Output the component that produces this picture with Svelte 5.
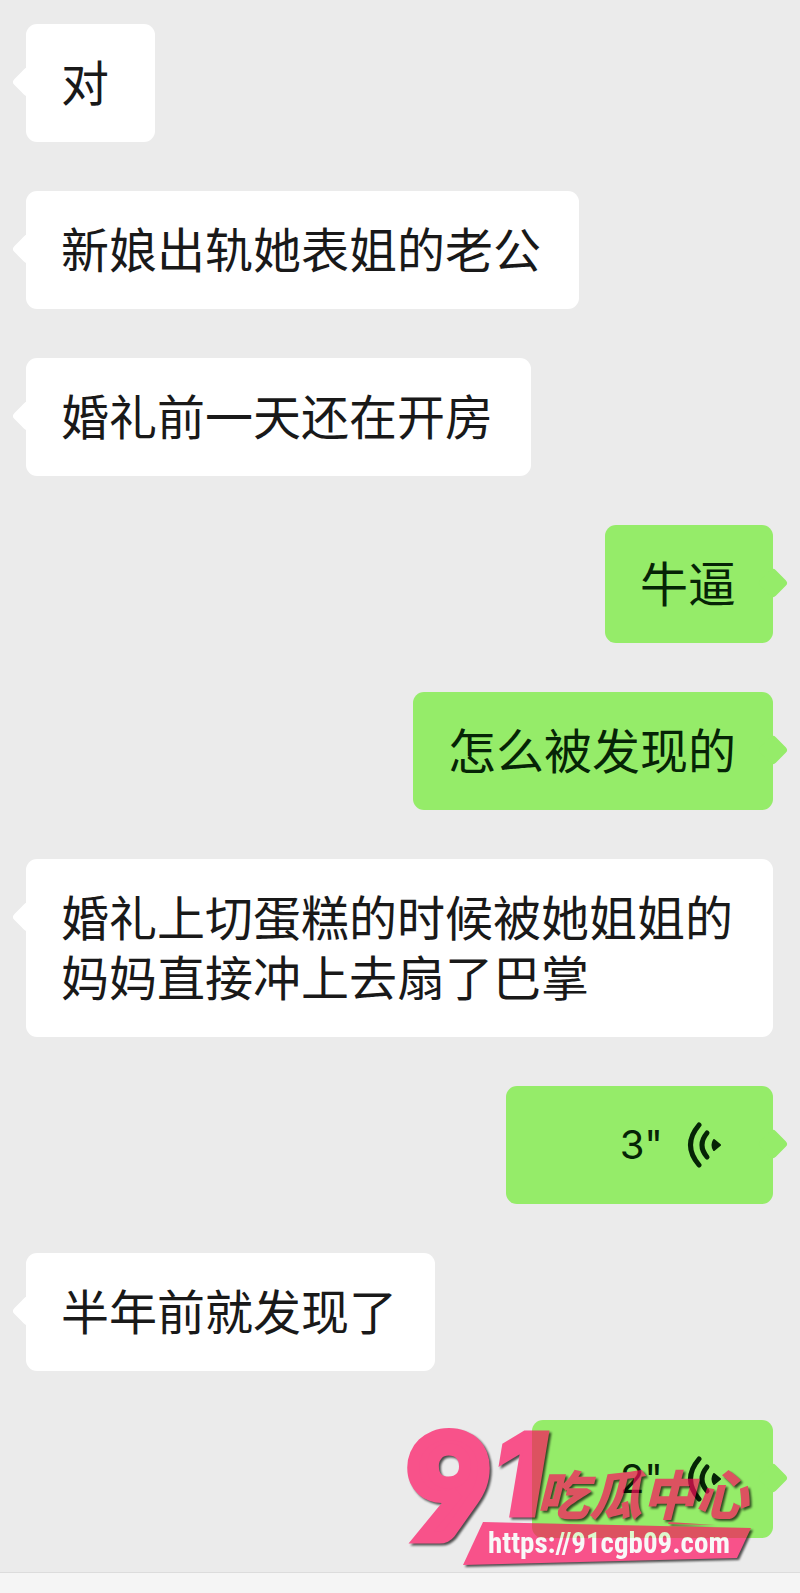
<script>
	const messages = [
		{ from: "them", text: "对" },
		{ from: "them", text: "新娘出轨她表姐的老公" },
		{ from: "them", text: "婚礼前一天还在开房" },
		{ from: "me", text: "牛逼" },
		{ from: "me", text: "怎么被发现的" },
		{ from: "them", text: "婚礼上切蛋糕的时候被她姐姐的妈妈直接冲上去扇了巴掌" },
		{ from: "me", seconds: 3 },
		{ from: "them", text: "半年前就发现了" },
		{ from: "me", seconds: 2 },
	];

	// longer voice messages get a wider bubble
	function voiceWidth(seconds) {
		return 189 + seconds * 26;
	}
</script>

<div class="chat">
	<ul class="messages">
		{#each messages as message}
			<li class="row {message.from}">
				{#if message.seconds}
					<button class="bubble voice" style="width: {voiceWidth(message.seconds)}px">
						<span>{message.seconds}"</span>
						<svg width="34" height="46" viewBox="0 0 34 46" aria-hidden="true">
							<path class="wave" d="M12 3Q-5 23 12 43" />
							<path class="wave" d="M20 11Q10 23 20 35" />
							<path class="dot" d="M27 18L33 23L27 28Q24 23 27 18Z" />
						</svg>
					</button>
				{:else}
					<p class="bubble">{message.text}</p>
				{/if}
			</li>
		{/each}
	</ul>

	<footer></footer>

	<svg class="watermark" width="400" height="200" viewBox="-20 -40 400 200">
		<g class="pink">
			<text class="nine" x="8" y="114">9</text>
			<text class="one" x="92" y="92">1</text>
			<text class="name" x="136" y="91">吃瓜中心</text>
			<path d="M83 98L351 104L337 134L63 141Z" />
			<path d="M269 98L315 101L268 100Z" />
		</g>
		<a href="https://91cgb09.com"><text class="url" x="88" y="129">https://91cgb09.com</text></a>
	</svg>
</div>

<style>
	:global(body) {
		margin: 0;
		background: #ebebeb;
	}

	.chat {
		position: relative;
		display: flex;
		flex-direction: column;
		min-height: 100vh;
		overflow: hidden;
		font-family: "Inter", "Noto Sans CJK SC", sans-serif;
	}

	.messages {
		flex: 1;
		display: flex;
		flex-direction: column;
		gap: 49px;
		margin: 0;
		padding: 24px 27px 34px 26px;
		list-style: none;
	}

	.row {
		display: flex;
	}

	.me {
		justify-content: flex-end;
	}

	.bubble {
		position: relative;
		box-sizing: border-box;
		min-width: 129px;
		margin: 0;
		padding: 26px 38px 32px 35px;
		border: 0;
		border-radius: 11px;
		background: #fff;
		color: #191919;
		font-family: "Noto Sans CJK SC", sans-serif;
		font-size: 48px;
		line-height: 60px;
	}

	.bubble::before {
		content: "";
		position: absolute;
		top: 47px;
		left: -10px;
		width: 22px;
		height: 22px;
		border-radius: 4px;
		background: inherit;
		transform: rotate(45deg);
	}

	.me .bubble {
		padding-right: 37px;
		background: #95ec69;
		color: #062406;
	}

	.me .bubble::before {
		left: auto;
		right: -11px;
	}

	.me .voice {
		display: flex;
		align-items: center;
		justify-content: flex-end;
		gap: 24px;
		padding: 29px 52px 29px 35px;
		font-family: "Inter", sans-serif;
		font-size: 40px;
	}

	.wave {
		fill: none;
		stroke: #062406;
		stroke-width: 5;
		stroke-linecap: round;
	}

	.dot {
		fill: #062406;
		stroke: #062406;
		stroke-width: 2;
		stroke-linejoin: round;
	}

	footer {
		height: 20px;
		border-top: 1px solid #dcdcdc;
		background: #f5f5f5;
	}

	.watermark {
		position: absolute;
		right: 20px;
		bottom: 9px;
		opacity: 0.67;
		pointer-events: none;
	}

	.pink {
		fill: #ff085c;
		filter: drop-shadow(2px 2px 1px #000);
	}

	.nine {
		font-family: "Lato", sans-serif;
		font-weight: 900;
		font-size: 142px;
		stroke: #ff085c;
		stroke-width: 12;
	}

	.one {
		font-style: italic;
		font-weight: 900;
		font-size: 116px;
		stroke: #ff085c;
		stroke-width: 3;
	}

	.name {
		font-family: "Noto Sans CJK SC", sans-serif;
		font-style: italic;
		font-weight: 900;
		font-size: 53px;
	}

	.url {
		fill: #fff;
		font-family: "Roboto Condensed", "Roboto", sans-serif;
		font-weight: 700;
		font-size: 29px;
	}
</style>
